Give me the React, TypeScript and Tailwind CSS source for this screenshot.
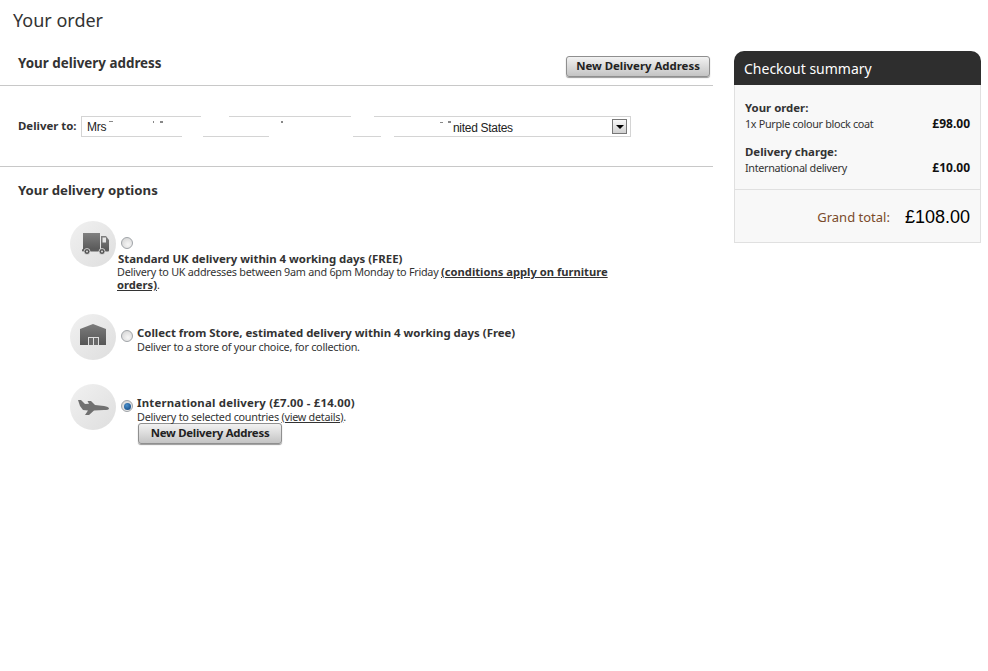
const sans = "font-['Noto_Sans',sans-serif]";

function Button() {
  return (
    <button className="block h-[21px] w-[144px] rounded-[3px] border border-[#8f8f8f] bg-gradient-to-b from-[#f2f2f2] to-[#c4c4c4] pb-px text-[11.400px] font-bold leading-none text-[#222] shadow-[0_1px_1px_#999]">
      New Delivery Address
    </button>
  );
}

function Radio({ checked }: { checked?: boolean }) {
  return (
    <span className="relative block h-3 w-3 shrink-0 rounded-full border border-[#a0a4a8] bg-[radial-gradient(circle_at_60%_65%,#f6f6f6,#d0d0d0)]">
      {checked && (
        <span className="absolute left-[1.500px] top-[1.500px] h-[7px] w-[7px] rounded-full bg-[radial-gradient(circle_at_40%_35%,#4a90cc,#0c3f78)]" />
      )}
    </span>
  );
}

function IconCircle({ children }: { children: React.ReactNode }) {
  return (
    <div className="flex h-[46px] w-[46px] shrink-0 items-center justify-center rounded-full bg-gradient-to-br from-[#f1f1f1] to-[#dedede]">
      {children}
    </div>
  );
}

const Truck = () => (
  <svg width="30" height="22" viewBox="0 0 30 22" className="ml-[1px]">
    <defs>
      <linearGradient id="tg" x1="0" y1="0" x2="0" y2="1">
        <stop offset="0" stopColor="#808080" />
        <stop offset="1" stopColor="#585858" />
      </linearGradient>
    </defs>
    <rect x="4" y="0" width="17" height="17" fill="url(#tg)" />
    <path d="M22 3h5l3 4v10h-8z" fill="url(#tg)" />
    <rect x="23.500" y="4.500" width="3.500" height="5" fill="#e6e6e6" />
    <rect x="3" y="16" width="27" height="2.500" rx="1" fill="#5c5c5c" />
    <circle cx="8" cy="18.500" r="3" fill="#555" stroke="#e8e8e8" strokeWidth="0.800" />
    <circle cx="8" cy="18.500" r="1" fill="#ddd" />
    <circle cx="23" cy="18.500" r="3" fill="#555" stroke="#e8e8e8" strokeWidth="0.800" />
    <circle cx="23" cy="18.500" r="1" fill="#ddd" />
  </svg>
);

const Store = () => (
  <svg width="28" height="26" viewBox="0 0 28 26">
    <defs>
      <linearGradient id="sg" x1="0" y1="0" x2="0" y2="1">
        <stop offset="0" stopColor="#7c7c7c" />
        <stop offset="1" stopColor="#565656" />
      </linearGradient>
    </defs>
    <path d="M1 5 14 0l13 5v16H1z" fill="url(#sg)" />
    <rect x="9" y="13" width="11" height="8" fill="#dedede" />
    <rect x="10" y="14" width="4" height="7" fill="#6a6a6a" />
    <rect x="15" y="14" width="4" height="7" fill="#6a6a6a" />
  </svg>
);

const Plane = () => (
  <svg width="32" height="18" viewBox="0 0 32 18">
    <path
      d="M1 2h3l4 4 4-.2L10.500 3H14l4 4 9 1c3 .4 5 1.500 5 2.500S30 12 27 12l-10 .5L12 17H8l3-4.500L6 12 3 8z"
      fill="#707070"
    />
  </svg>
);

export default function App() {
  return (
    <div className={`${sans} h-[671px] w-[988px] bg-white text-[#333]`}>
      <h1 className="pl-[13px] pt-[9px] text-[18px] font-normal leading-[22px] text-[#333]">Your order</h1>
      <div className="mt-5 flex items-start">
        <main className="w-[713px] shrink-0">
          <section className="flex h-[35px] items-start justify-between border-b border-[#c8c8c8] pl-[18px] pr-[3px]">
            <h2 className="mt-[5px] text-[13.400px] font-bold leading-[14px]">Your delivery address</h2>
            <div className="mt-[5px]"><Button /></div>
          </section>

          <div className="flex h-[81px] items-center border-b border-[#c8c8c8] pl-[18px]">
            <span className="w-[63px] whitespace-nowrap text-[11.400px] font-bold">Deliver to:</span>
            <div className="relative flex h-[21px] w-[550px] items-center justify-between border border-[#d4d4d4] pl-[5px] pr-[3px] font-['Liberation_Sans',sans-serif] text-[12px] tracking-[-0.3px] text-[#222]">
              <span className="pt-[2px]">Mrs</span>
              <span className="absolute left-[371px] top-[2px]">nited States</span>
              <span className="flex h-[15px] w-[15px] items-center justify-center border border-[#777] bg-gradient-to-b from-[#f8f8f8] to-[#d0d0d0]">
                <span className="mt-[2px] h-0 w-0 border-x-[4px] border-t-[4px] border-x-transparent border-t-black" />
              </span>
              <span className="absolute -top-px left-[119px] h-[2px] w-7 bg-white" />
              <span className="absolute -top-px left-[269px] h-[2px] w-[23px] bg-white" />
              <span className="absolute -bottom-px left-[100px] h-[2px] w-[21px] bg-white" />
              <span className="absolute -bottom-px left-[187px] h-[2px] w-[84px] bg-white" />
              <span className="absolute -bottom-px left-[299px] h-[2px] w-[13px] bg-white" />
              <span className="absolute left-[27px] top-[4px] h-px w-[4px] bg-[#888]" />
              <span className="absolute left-[71px] top-[4px] h-[2px] w-px bg-[#888]" />
              <span className="absolute left-[78px] top-[4px] h-[2px] w-[3px] bg-[#888]" />
              <span className="absolute left-[199px] top-[4px] h-[2px] w-[2px] bg-[#888]" />
              <span className="absolute left-[358px] top-[5px] h-px w-[3px] bg-[#888]" />
              <span className="absolute left-[366px] top-[4px] h-[2px] w-[3px] bg-[#888]" />
            </div>
          </div>

          <h2 className="pl-[18px] pt-[16px] text-[13.200px] font-bold leading-[14px]">Your delivery options</h2>

          <div className="pl-[70px] pt-[24px] text-[10.800px] leading-[13px] tracking-[-0.25px]">
            <div className="flex h-[93px] items-start">
              <IconCircle><Truck /></IconCircle>
              <div className="ml-[1px] w-[495px]">
                <div className="ml-[4px] mt-[16px]"><Radio /></div>
                <p className="ml-px mt-[3px] text-[11.400px] font-bold tracking-normal">Standard UK delivery within 4 working days (FREE)</p>
                <p>
                  Delivery to UK addresses between 9am and 6pm Monday to Friday{" "}
                  <a className="text-[11.200px] font-bold tracking-normal underline">(conditions apply on furniture orders)</a>.
                </p>
              </div>
            </div>

            <div className="flex h-[70px] items-start">
              <IconCircle><Store /></IconCircle>
              <div className="ml-[5px] mt-[16px]"><Radio /></div>
              <div className="ml-[4px] mt-[12px]">
                <p className="text-[11.400px] font-bold tracking-normal">Collect from Store, estimated delivery within 4 working days (Free)</p>
                <p className="mt-px">Deliver to a store of your choice, for collection.</p>
              </div>
            </div>

            <div className="flex items-start">
              <IconCircle><Plane /></IconCircle>
              <div className="ml-[5px] mt-[16px]"><Radio checked /></div>
              <div className="ml-[4px] mt-[12px]">
                <p className="text-[11.400px] font-bold tracking-[0.2px]">International delivery (£7.00 - £14.00)</p>
                <p className="mt-px">Delivery to selected countries <a className="underline">(view details)</a>.</p>
                <div className="ml-[1px]"><Button /></div>
              </div>
            </div>
          </div>
        </main>

        <aside className="ml-[21px] w-[247px] text-[10.800px] tracking-[-0.32px]">
          <div className="flex h-[34px] items-center rounded-t-[10px] bg-[#2e2e2e] pl-[10px] text-[14px] tracking-normal text-white">Checkout summary</div>
          <div className="border border-t-0 border-[#e0e0e0] bg-[#f8f8f8]">
            <div className="border-b border-[#e0e0e0] px-[10px] pb-[13px] pt-[15px] leading-[16px]">
              <p className="text-[11.400px] font-bold tracking-normal">Your order:</p>
              <div className="flex justify-between"><span>1x Purple colour block coat</span><b className="text-[12px] tracking-normal text-[#111]">£98.00</b></div>
              <p className="mt-[12px] text-[11.400px] font-bold tracking-normal">Delivery charge:</p>
              <div className="flex justify-between"><span>International delivery</span><b className="text-[12px] tracking-normal text-[#111]">£10.00</b></div>
            </div>
            <div className="flex h-[52px] items-center justify-end gap-[15px] pr-[10px] pt-[3px]">
              <span className="text-[13px] tracking-normal text-[#7a4a2a]">Grand total:</span>
              <span className="font-['Liberation_Sans',sans-serif] text-[18px] tracking-normal text-black">£108.00</span>
            </div>
          </div>
        </aside>
      </div>
    </div>
  );
}
